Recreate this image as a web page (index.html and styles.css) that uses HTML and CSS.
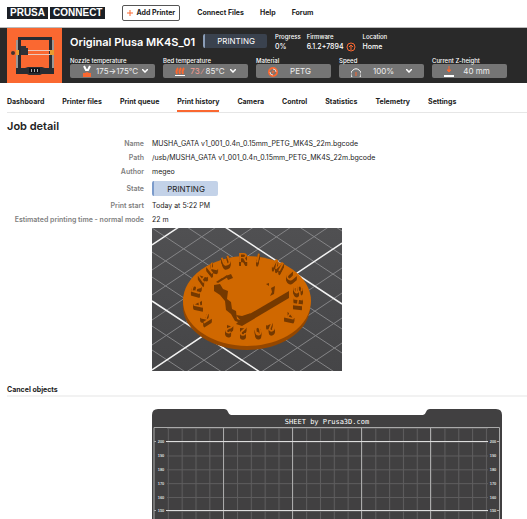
FILE: index.html
```html
<!DOCTYPE html>
<html lang="en">
<head>
<meta charset="utf-8">
<meta name="viewport" content="width=device-width, initial-scale=1">
<title>Original Plusa MK4S_01 - Prusa Connect</title>
<link rel="stylesheet" href="styles.css">
</head>
<body>
<header class="topbar">
  <a class="logo" href="#"><span>PRUSA</span><span>CONNECT</span></a>
  <button class="add" type="button"><svg width="6" height="6" viewBox="0 0 6 6"><path d="M3 0v6M0 3h6" stroke="#fa6831"/></svg>Add Printer</button>
  <nav class="links"><a href="#">Connect Files</a><a href="#">Help</a><a href="#">Forum</a></nav>
</header>

<section class="printer">
  <div class="photo">
    <svg width="55" height="55" viewBox="0 0 55 55">
      <path d="M11 10.500h34" stroke="#292c31" stroke-width="3"/>
      <path d="M12.500 10v31M43.500 10v31" stroke="#292c31" stroke-width="3"/>
      <path d="M10 12v28M46 12v28" stroke="#9b9796" stroke-width="2"/>
      <path d="M14 22.500h30M14 26.500h30" stroke="#ecc9ba"/>
      <path d="M14 18h5v2h2v7h-7z" fill="#303136"/>
      <circle cx="6" cy="25" r="2" fill="#45342f"/>
      <path d="M9 22h3v5H9zM43 22h4v5h-4z" fill="#e99b30"/>
      <path d="M9 40h9l3-1h14l3 1h9v6H35l-2 1H22l-2-1H9z" fill="#292c31"/>
      <path d="M22 40h11v5H22z" fill="#111419"/>
      <path d="M24.500 41v3M27.500 41v3M30.500 41v3" stroke="#a8aeb1"/>
    </svg>
  </div>
  <div class="info">
    <div class="summary">
      <h1>Original Plusa MK4S_01</h1>
      <span class="badge badge-dark">PRINTING</span>
      <dl class="facts">
        <div><dt>Progress</dt><dd>0%</dd></div>
        <div><dt>Firmware</dt><dd>6.1.2+7894<svg width="10" height="10" viewBox="0 0 10 10" fill="none" stroke="#fa6831"><circle cx="5" cy="5" r="4"/><path d="M5 8V3M3 5l2-2 2 2"/></svg></dd></div>
        <div><dt>Location</dt><dd>Home</dd></div>
      </dl>
    </div>
    <div class="controls">
      <div class="control wide">
        <span class="caption" id="nozzle">Nozzle temperature</span>
        <button class="field" type="button" aria-labelledby="nozzle nozzle-value">
          <svg class="icon" width="10" height="12" viewBox="0 0 10 12"><path d="M2 1l2 4h2l2-4" fill="none" stroke="#fff" stroke-width="2"/><path d="M1 8h2l2-1 2 1h2v4H1z" fill="#fa6831"/></svg>
          <span id="nozzle-value">175→175°C</span>
          <svg class="chevron" width="6" height="4" viewBox="0 0 6 4"><path d="M0 0l3 3 3-3" fill="none" stroke="#fff" stroke-width="1.500"/></svg>
        </button>
      </div>
      <div class="control wide">
        <span class="caption" id="bed">Bed temperature</span>
        <button class="field" type="button" aria-labelledby="bed bed-value">
          <svg class="icon" width="10" height="12" viewBox="0 0 10 12"><path d="M2 3q1 1 0 2t0 4M5 3q1 1 0 2t0 4M8 3q1 1 0 2t0 4" fill="none" stroke="#fa6831" stroke-width="2"/><path d="M0 10.500h10" stroke="#fff"/></svg>
          <span id="bed-value"><span class="heating">73 ∕</span> 85°C</span>
          <svg class="chevron" width="6" height="4" viewBox="0 0 6 4"><path d="M0 0l3 3 3-3" fill="none" stroke="#fff" stroke-width="1.500"/></svg>
        </button>
      </div>
      <div class="control">
        <span class="caption">Material</span>
        <div class="field">
          <svg class="icon" width="10" height="12" viewBox="0 0 10 12" fill="none" stroke="#fa6831"><circle cx="5" cy="7" r="4" stroke-width="2"/><circle cx="5" cy="7" r="1"/><path d="M5 4a3 3 0 0 1 3 3M5 10a3 3 0 0 1-3-3" stroke="#e8d8d0"/></svg>
          <span>PETG</span>
        </div>
      </div>
      <div class="control wide">
        <label class="caption" for="speed">Speed</label>
        <div class="field">
          <svg class="icon" width="10" height="12" viewBox="0 0 10 12" fill="none"><path d="M1 12A5 5 0 1 1 9 12" stroke="#fff"/><path d="M5 11V7" stroke="#fa6831"/></svg>
          <select id="speed"><option>100%</option></select>
          <svg class="chevron" width="6" height="4" viewBox="0 0 6 4"><path d="M0 0l3 3 3-3" fill="none" stroke="#fff" stroke-width="1.500"/></svg>
        </div>
      </div>
      <div class="control">
        <span class="caption">Current Z-height</span>
        <div class="field">
          <svg class="icon" width="10" height="12" viewBox="0 0 10 12"><path d="M5 1v5M3 5l2 2 2-2z" fill="#fa6831" stroke="#fa6831"/><path d="M0 11h10" stroke="#fff" stroke-width="2"/></svg>
          <span>40 mm</span>
        </div>
      </div>
    </div>
  </div>
</section>

<main>
  <nav class="tabs">
    <a href="#">Dashboard</a><a href="#">Printer files</a><a href="#">Print queue</a><a class="active" href="#" aria-current="page">Print history</a><a href="#">Camera</a><a href="#">Control</a><a href="#">Statistics</a><a href="#">Telemetry</a><a href="#">Settings</a>
  </nav>

  <h2>Job detail</h2>
  <dl class="details">
    <dt>Name</dt><dd>MUSHA_GATA v1_001_0.4n_0.15mm_PETG_MK4S_22m.bgcode</dd>
    <dt>Path</dt><dd>/usb/MUSHA_GATA v1_001_0.4n_0.15mm_PETG_MK4S_22m.bgcode</dd>
    <dt>Author</dt><dd>megeo</dd>
    <dt>State</dt><dd class="state"><span class="badge badge-light">PRINTING</span></dd>
    <dt>Print start</dt><dd>Today at 5:22 PM</dd>
    <dt>Estimated printing time - normal mode</dt><dd>22 m</dd>
  </dl>

  <svg class="preview" width="190" height="143" viewBox="0 0 190 143" role="img" aria-label="Model preview">
    <defs><linearGradient id="floor" x2="0" y2="1"><stop stop-color="#505052"/><stop offset="1" stop-color="#454547"/></linearGradient></defs>
    <path d="M0 0h190v143H0z" fill="url(#floor)"/>
    <path d="M0-24l190 125M0 0l190 125M0 24l190 125M0 49l190 125M0 98l190 125M0 122l190 125M0-73l190 125M0-98l190 125M0-122l190 125M0 42L190-85M0 67L190-60M0 92L190-35M0 117L190-10M0 167L190 40M0 192L190 65M0 217L190 90M0 242L190 115" stroke="#858587" fill="none"/>
    <path d="M0-49L190 76M0 73l190 125M0 17L190-110M0 142L190 15" stroke="#f2f2f2" stroke-width="1.500" fill="none"/>
    <path d="M31 73v6c0 23 29 43 64 43s63-20 63-43v-6z" fill="#944700"/>
    <ellipse cx="95" cy="73" rx="64" ry="45" fill="#d06800"/>
    <g fill="#753900">
      <path d="M62 57l6-1 3 5 5 2-1 8 4 3 1 7 4 2 1 8 5 2-1 2-6-2-4-7-5-4-1-9-5-6-6-4z"/>
      <path d="M89 91l48-28v7l-47 28-6-2z"/>
      <path d="M64 54l6-4 1 2-5 3zM69 51l6-4 1 2-5 3zM74 48l5-2 2 4-5 2z"/>
      <path d="M114 56l3-1v3zM119 60l4-2-1 8-4 2 2-4zM84 87l6 1 9-3-6 6-5 1z"/>
    </g>
    <g class="relief">
      <text transform="translate(54 90) rotate(238)">K</text>
      <text transform="translate(46 76) rotate(262)">A</text>
      <text transform="translate(44 61) rotate(285)">R</text>
      <text transform="translate(50 49) rotate(305)">A</text>
      <text transform="translate(60 40) rotate(322)">K</text>
      <text transform="translate(74 33) rotate(340)">U</text>
      <text transform="translate(91 29)">R</text>
      <text transform="translate(106 30) rotate(12)">I</text>
      <text transform="translate(126 37) rotate(28)">M</text>
      <text transform="translate(139 48) rotate(48)">U</text>
      <text transform="translate(146 61) rotate(70)">S</text>
      <text transform="translate(146 74) rotate(97)">H</text>
      <text transform="translate(138 88) rotate(122)">A</text>
      <text transform="translate(119 99) rotate(155)">2</text>
      <text transform="translate(106 103) rotate(170)">0</text>
      <text transform="translate(91 103) rotate(182)">2</text>
      <text transform="translate(77 101) rotate(198)">2</text>
    </g>
  </svg>

  <h3>Cancel objects</h3>
  <div class="bed">
    <svg class="sheet" width="350" height="330" viewBox="0 0 350 330" role="img" aria-label="Print sheet">
      <defs>
        <pattern id="minor" x="2" y="5" width="13.83" height="13.83" patternUnits="userSpaceOnUse"><path d="M0 .5h14M.5 0v14" stroke="#5e5d5e" fill="none"/></pattern>
      </defs>
      <path d="M0 330V6q0-6 6-6h66q3 0 4 3t3 3h192q2 0 3-3t4-3h66q6 0 6 6v324z" fill="#414041"/>
      <path d="M15 19h321v311H15z" fill="url(#minor)"/>
      <path d="M71 18v312M140 18v312M209 18v312M278 18v312" stroke="#aaa" fill="none" transform="translate(.5)"/>
      <path d="M2 330V18.500h345.500V330M2 32.500h2M345 32.500h3M2 101.500h2M345 101.500h3" stroke="#aaa" fill="none"/>
      <path d="M14 32.500h322M14 101.500h322" stroke="#ddd" fill="none"/>
      <text class="brand" x="175" y="15">SHEET by Prusa3D.com</text>
      <g class="scale">
        <text x="9" y="34">200</text><text x="9" y="48">190</text><text x="9" y="62">180</text><text x="9" y="76">170</text><text x="9" y="90">160</text><text x="9" y="103">150</text>
        <text x="341" y="34">200</text><text x="341" y="48">190</text><text x="341" y="62">180</text><text x="341" y="76">170</text><text x="341" y="90">160</text><text x="341" y="103">150</text>
      </g>
    </svg>
  </div>
</main>
</body>
</html>
```
FILE: styles.css
```css
* { box-sizing: border-box; }

body {
  margin: 0;
  height: 100vh;
  display: flex;
  flex-direction: column;
  overflow: hidden;
  background: #fff;
  color: #222;
  font: 7px/10px Inter, "Liberation Sans", sans-serif;
}

h1, h2, h3, dl, dd { margin: 0; }
a { color: inherit; text-decoration: none; }
button, select { font: inherit; color: inherit; }
svg { flex: none; display: block; }

.topbar {
  display: flex;
  align-items: center;
  gap: 17px;
  height: 28px;
  padding: 0 7px 1px;
  border-bottom: 1px solid #bbb;
}
.logo {
  display: flex;
  gap: 2px;
  color: #fff;
  font: bold 10px/12px "Liberation Sans", sans-serif;
}
.logo span { padding: 0 3px; background: #1b2026; }
.add {
  display: flex;
  align-items: center;
  gap: 3px;
  height: 16px;
  padding: 0 4px;
  border: 1px solid #555;
  border-radius: 2px;
  background: #fff;
  font-weight: 700;
}
.links { display: flex; gap: 16px; font-weight: 700; }

.printer {
  display: flex;
  gap: 8px;
  padding: 0 7px;
  background: #292929;
  color: #fff;
}
.photo { background: #fa6831; }
.info { flex: 1; }
.summary { display: flex; gap: 8px; padding-top: 6px; height: 29px; }
h1 { font-size: 11px; line-height: 16px; font-weight: 600; }
.badge {
  width: 64px;
  height: 14px;
  border-radius: 2px;
  border-left: 2px solid;
  font-size: 8px;
  line-height: 15px;
  text-align: center;
}
.badge-dark { background: #3a424e; border-color: #8a9db7; }
.badge-light {
  display: block;
  width: 66px;
  height: 15px;
  line-height: 17px;
  background: #c3d2e8;
  border-color: #7b9bcb;
}
.facts { display: flex; gap: 6px; }
.facts dt { font-size: 6px; line-height: 6px; font-weight: 500; }
.facts dd { display: flex; align-items: center; gap: 3px; height: 14px; font-weight: 500; }

.controls { display: flex; gap: 8px; }
.control { width: 75px; }
.wide { width: 85px; }
.caption { display: block; font-size: 6px; line-height: 7px; font-weight: 500; }
.field {
  display: flex;
  align-items: center;
  gap: 4px;
  width: 100%;
  height: 14px;
  padding: 0 12px;
  border: 0;
  border-radius: 2px;
  background: #757575;
  color: #eee;
  font-size: 8px;
}
.field span, .field select { flex: 1; white-space: nowrap; text-align: center; }
.field select {
  min-width: 0;
  padding: 0;
  border: 0;
  background: none;
  appearance: none;
}
.heating { color: #f49d93; }

main {
  flex: 1;
  min-height: 0;
  display: flex;
  flex-direction: column;
  padding: 0 0 0 7px;
}
.tabs {
  display: flex;
  gap: 18px;
  height: 30px;
  padding-top: 14px;
  border-bottom: 1px solid #e6e6e6;
  font-weight: 700;
}
.tabs .active { height: 15px; border-bottom: 2px solid #fa6831; }
h2 { padding: 5px 0 3px; font-size: 11px; line-height: 16px; font-weight: 600; }
.details {
  display: grid;
  grid-template-columns: 137px 1fr;
  column-gap: 8px;
  line-height: 14px;
}
.details dt { color: #808080; font-weight: 600; text-align: right; }
.details .state { padding: 2px 0 3px; }
.details .state, .details dt { align-self: center; }

.preview { margin: 1px 0 0 145px; }
.relief {
  fill: #d06800;
  font: bold 13px "Liberation Sans", sans-serif;
  text-anchor: middle;
  dominant-baseline: central;
  filter: drop-shadow(0 1px 0 #753900) drop-shadow(0 2px 0 #753900) drop-shadow(0 1px 0 #753900);
}
h3 {
  margin-top: 13px;
  border-bottom: 2px solid #f2f2f2;
  font-size: 7px;
  line-height: 11px;
  font-weight: 700;
}
.bed { flex: 1; min-height: 0; padding: 12px 0 0 145px; overflow: hidden; }
.brand { fill: #fff; font: 7px "DejaVu Sans Mono", monospace; text-anchor: middle; }
.scale { fill: #ddd; font: bold 4px "Liberation Sans", sans-serif; text-anchor: middle; }
```
